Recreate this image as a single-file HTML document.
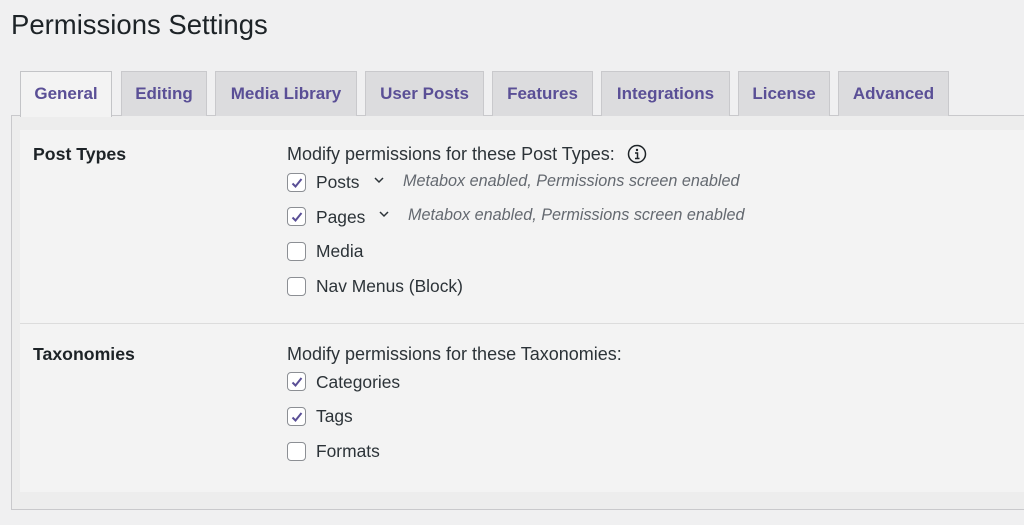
<!DOCTYPE html>
<html><head><meta charset="utf-8"><style>
*{box-sizing:border-box;margin:0;padding:0}
body{width:1024px;height:525px;background:#f0f0f1;font-family:"Liberation Sans",sans-serif;color:#2c3338;position:relative;overflow:hidden}
.abs{position:absolute}
h1{position:absolute;left:11px;top:9px;font-size:27.5px;font-weight:400;color:#1d2327}
.tab{position:absolute;top:71px;height:45px;background:#dcdcde;border:1px solid #c9c9cc;border-bottom:none;color:#5a4f96;font-size:17px;font-weight:700;text-align:center;line-height:44px}
.tab.a{background:#f3f3f3;height:46px;z-index:2;border-color:#c3c4c7}
.panel{position:absolute;left:11px;top:115px;width:1020px;height:395px;border:1px solid #c9c9cc;border-right:none;background:#ededed}
.inner{position:absolute;left:20px;top:130px;width:1010px;height:362px;background:#f3f3f3}
.sep{position:absolute;left:20px;top:323px;width:1004px;border-top:1px solid #dcdcdc}
.hd{position:absolute;left:33px;font-size:17.7px;font-weight:700;color:#1d2327}
.t{position:absolute;font-size:17.4px;color:#2c3338;white-space:nowrap}
.m{font-size:18px}
.cb{position:absolute;left:287px;width:19px;height:19px;border:1px solid #8c8f94;border-radius:4px;background:#fff}
.cb svg{position:absolute;left:1px;top:1px}
.i{font-style:italic;color:#646970;font-size:16.2px}
</style></head><body>
<h1>Permissions Settings</h1>
<div class="panel"></div>
<div class="tab a" style="left:20px;width:92px">General</div>
<div class="tab" style="left:121px;width:86px">Editing</div>
<div class="tab" style="left:215px;width:142px">Media Library</div>
<div class="tab" style="left:365px;width:119px">User Posts</div>
<div class="tab" style="left:492px;width:101px">Features</div>
<div class="tab" style="left:601px;width:129px">Integrations</div>
<div class="tab" style="left:738px;width:92px">License</div>
<div class="tab" style="left:838px;width:111px">Advanced</div>
<div class="inner"></div>
<div class="sep"></div>

<div class="hd" style="top:144px">Post Types</div>
<div class="t m" style="left:287px;top:144px">Modify permissions for these Post Types:</div>
<svg class="abs" style="left:627px;top:144px" width="20" height="20" viewBox="0 0 20 20"><circle cx="10" cy="10" r="8.5" fill="none" stroke="#1d2327" stroke-width="1.5"/><circle cx="10" cy="6" r="1.2" fill="#1d2327"/><path d="M8 9h2.5v5.5M8 14.5h4.5" stroke="#1d2327" stroke-width="1.5" fill="none"/></svg>

<div class="cb" style="top:173px"><svg width="16" height="16" viewBox="0 0 16 16"><path d="M3.5 8.5l3 3 6-7.5" stroke="#5a4f96" stroke-width="2" fill="none"/></svg></div>
<div class="t" style="left:316px;top:172px">Posts</div>
<svg class="abs" style="left:373px;top:175px" width="12" height="10"><path d="M2 3l4 4 4-4" stroke="#2c3338" stroke-width="1.5" fill="none"/></svg>
<div class="t i" style="left:403px;top:172px">Metabox enabled, Permissions screen enabled</div>

<div class="cb" style="top:207px"><svg width="16" height="16" viewBox="0 0 16 16"><path d="M3.5 8.5l3 3 6-7.5" stroke="#5a4f96" stroke-width="2" fill="none"/></svg></div>
<div class="t" style="left:316px;top:207px">Pages</div>
<svg class="abs" style="left:378px;top:209px" width="12" height="10"><path d="M2 3l4 4 4-4" stroke="#2c3338" stroke-width="1.5" fill="none"/></svg>
<div class="t i" style="left:408px;top:206px">Metabox enabled, Permissions screen enabled</div>

<div class="cb" style="top:242px"></div>
<div class="t" style="left:316px;top:241px">Media</div>
<div class="cb" style="top:277px"></div>
<div class="t" style="left:316px;top:276px">Nav Menus (Block)</div>

<div class="hd" style="top:344px">Taxonomies</div>
<div class="t m" style="left:287px;top:344px">Modify permissions for these Taxonomies:</div>
<div class="cb" style="top:372px"><svg width="16" height="16" viewBox="0 0 16 16"><path d="M3.5 8.5l3 3 6-7.5" stroke="#5a4f96" stroke-width="2" fill="none"/></svg></div>
<div class="t" style="left:316px;top:372px">Categories</div>
<div class="cb" style="top:407px"><svg width="16" height="16" viewBox="0 0 16 16"><path d="M3.5 8.5l3 3 6-7.5" stroke="#5a4f96" stroke-width="2" fill="none"/></svg></div>
<div class="t" style="left:316px;top:406px">Tags</div>
<div class="cb" style="top:442px"></div>
<div class="t" style="left:316px;top:441px">Formats</div>
</body></html>
